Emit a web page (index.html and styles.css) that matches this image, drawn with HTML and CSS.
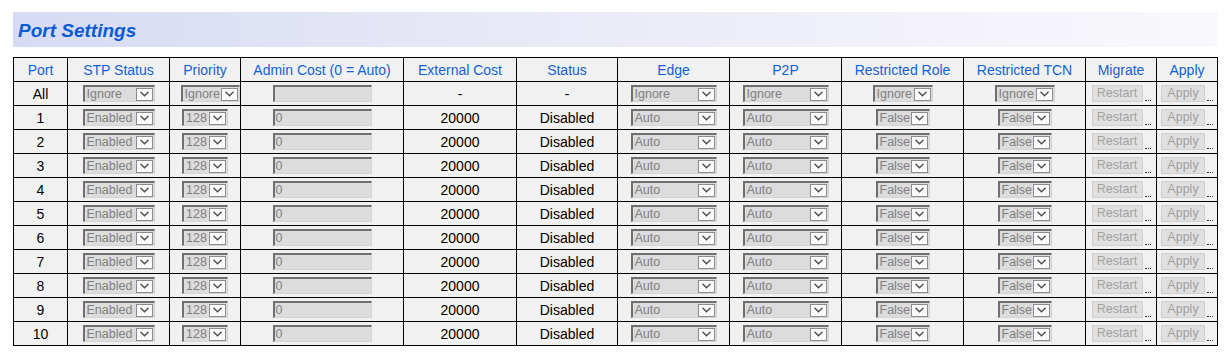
FILE: index.html
```html
<!DOCTYPE html>
<html>
<head>
<meta charset="utf-8">
<link rel="stylesheet" href="styles.css">
</head>
<body>
<div class="page">
  <div class="titlebar"><h1>Port Settings</h1></div>
  <table class="grid">
    <colgroup>
      <col class="c-port"><col class="c-stp"><col class="c-pri"><col class="c-admin"><col class="c-ext"><col class="c-status"><col class="c-edge"><col class="c-p2p"><col class="c-rr"><col class="c-tcn"><col class="c-mig"><col class="c-apply">
    </colgroup>
    <thead>
      <tr><th>Port</th><th>STP Status</th><th>Priority</th><th>Admin Cost (0 = Auto)</th><th>External Cost</th><th>Status</th><th>Edge</th><th>P2P</th><th>Restricted Role</th><th>Restricted TCN</th><th>Migrate</th><th>Apply</th></tr>
    </thead>
    <tbody>
      <tr><td>All</td>
        <td><span class="sel w-stp"><span class="v">Ignore</span><span class="arr"><svg width="9" height="6" viewBox="0 0 9 6"><polyline points="0.5,0.8 4.5,4.8 8.5,0.8"/></svg></span></span></td>
        <td><span class="sel w-pri-all"><span class="v">Ignore</span><span class="arr"><svg width="9" height="6" viewBox="0 0 9 6"><polyline points="0.5,0.8 4.5,4.8 8.5,0.8"/></svg></span></span></td>
        <td><span class="inp"></span></td>
        <td>-</td><td>-</td>
        <td><span class="sel w-edge"><span class="v">Ignore</span><span class="arr"><svg width="9" height="6" viewBox="0 0 9 6"><polyline points="0.5,0.8 4.5,4.8 8.5,0.8"/></svg></span></span></td>
        <td><span class="sel w-edge"><span class="v">Ignore</span><span class="arr"><svg width="9" height="6" viewBox="0 0 9 6"><polyline points="0.5,0.8 4.5,4.8 8.5,0.8"/></svg></span></span></td>
        <td><span class="sel w-ign"><span class="v">Ignore</span><span class="arr"><svg width="9" height="6" viewBox="0 0 9 6"><polyline points="0.5,0.8 4.5,4.8 8.5,0.8"/></svg></span></span></td>
        <td><span class="sel w-ign"><span class="v">Ignore</span><span class="arr"><svg width="9" height="6" viewBox="0 0 9 6"><polyline points="0.5,0.8 4.5,4.8 8.5,0.8"/></svg></span></span></td>
        <td><span class="btn w-restart">Restart</span><span class="dots"></span></td>
        <td><span class="btn w-apply">Apply</span><span class="dots"></span></td>
      </tr>
      <tr><td>1</td>
        <td><span class="sel w-stp"><span class="v">Enabled</span><span class="arr"><svg width="9" height="6" viewBox="0 0 9 6"><polyline points="0.5,0.8 4.5,4.8 8.5,0.8"/></svg></span></span></td>
        <td><span class="sel w-pri"><span class="v">128</span><span class="arr"><svg width="9" height="6" viewBox="0 0 9 6"><polyline points="0.5,0.8 4.5,4.8 8.5,0.8"/></svg></span></span></td>
        <td><span class="inp">0</span></td>
        <td>20000</td><td>Disabled</td>
        <td><span class="sel w-edge"><span class="v">Auto</span><span class="arr"><svg width="9" height="6" viewBox="0 0 9 6"><polyline points="0.5,0.8 4.5,4.8 8.5,0.8"/></svg></span></span></td>
        <td><span class="sel w-edge"><span class="v">Auto</span><span class="arr"><svg width="9" height="6" viewBox="0 0 9 6"><polyline points="0.5,0.8 4.5,4.8 8.5,0.8"/></svg></span></span></td>
        <td><span class="sel w-false"><span class="v">False</span><span class="arr"><svg width="9" height="6" viewBox="0 0 9 6"><polyline points="0.5,0.8 4.5,4.8 8.5,0.8"/></svg></span></span></td>
        <td><span class="sel w-false"><span class="v">False</span><span class="arr"><svg width="9" height="6" viewBox="0 0 9 6"><polyline points="0.5,0.8 4.5,4.8 8.5,0.8"/></svg></span></span></td>
        <td><span class="btn w-restart">Restart</span><span class="dots"></span></td>
        <td><span class="btn w-apply">Apply</span><span class="dots"></span></td>
      </tr>
      <tr><td>2</td>
        <td><span class="sel w-stp"><span class="v">Enabled</span><span class="arr"><svg width="9" height="6" viewBox="0 0 9 6"><polyline points="0.5,0.8 4.5,4.8 8.5,0.8"/></svg></span></span></td>
        <td><span class="sel w-pri"><span class="v">128</span><span class="arr"><svg width="9" height="6" viewBox="0 0 9 6"><polyline points="0.5,0.8 4.5,4.8 8.5,0.8"/></svg></span></span></td>
        <td><span class="inp">0</span></td>
        <td>20000</td><td>Disabled</td>
        <td><span class="sel w-edge"><span class="v">Auto</span><span class="arr"><svg width="9" height="6" viewBox="0 0 9 6"><polyline points="0.5,0.8 4.5,4.8 8.5,0.8"/></svg></span></span></td>
        <td><span class="sel w-edge"><span class="v">Auto</span><span class="arr"><svg width="9" height="6" viewBox="0 0 9 6"><polyline points="0.5,0.8 4.5,4.8 8.5,0.8"/></svg></span></span></td>
        <td><span class="sel w-false"><span class="v">False</span><span class="arr"><svg width="9" height="6" viewBox="0 0 9 6"><polyline points="0.5,0.8 4.5,4.8 8.5,0.8"/></svg></span></span></td>
        <td><span class="sel w-false"><span class="v">False</span><span class="arr"><svg width="9" height="6" viewBox="0 0 9 6"><polyline points="0.5,0.8 4.5,4.8 8.5,0.8"/></svg></span></span></td>
        <td><span class="btn w-restart">Restart</span><span class="dots"></span></td>
        <td><span class="btn w-apply">Apply</span><span class="dots"></span></td>
      </tr>
      <tr><td>3</td>
        <td><span class="sel w-stp"><span class="v">Enabled</span><span class="arr"><svg width="9" height="6" viewBox="0 0 9 6"><polyline points="0.5,0.8 4.5,4.8 8.5,0.8"/></svg></span></span></td>
        <td><span class="sel w-pri"><span class="v">128</span><span class="arr"><svg width="9" height="6" viewBox="0 0 9 6"><polyline points="0.5,0.8 4.5,4.8 8.5,0.8"/></svg></span></span></td>
        <td><span class="inp">0</span></td>
        <td>20000</td><td>Disabled</td>
        <td><span class="sel w-edge"><span class="v">Auto</span><span class="arr"><svg width="9" height="6" viewBox="0 0 9 6"><polyline points="0.5,0.8 4.5,4.8 8.5,0.8"/></svg></span></span></td>
        <td><span class="sel w-edge"><span class="v">Auto</span><span class="arr"><svg width="9" height="6" viewBox="0 0 9 6"><polyline points="0.5,0.8 4.5,4.8 8.5,0.8"/></svg></span></span></td>
        <td><span class="sel w-false"><span class="v">False</span><span class="arr"><svg width="9" height="6" viewBox="0 0 9 6"><polyline points="0.5,0.8 4.5,4.8 8.5,0.8"/></svg></span></span></td>
        <td><span class="sel w-false"><span class="v">False</span><span class="arr"><svg width="9" height="6" viewBox="0 0 9 6"><polyline points="0.5,0.8 4.5,4.8 8.5,0.8"/></svg></span></span></td>
        <td><span class="btn w-restart">Restart</span><span class="dots"></span></td>
        <td><span class="btn w-apply">Apply</span><span class="dots"></span></td>
      </tr>
      <tr><td>4</td>
        <td><span class="sel w-stp"><span class="v">Enabled</span><span class="arr"><svg width="9" height="6" viewBox="0 0 9 6"><polyline points="0.5,0.8 4.5,4.8 8.5,0.8"/></svg></span></span></td>
        <td><span class="sel w-pri"><span class="v">128</span><span class="arr"><svg width="9" height="6" viewBox="0 0 9 6"><polyline points="0.5,0.8 4.5,4.8 8.5,0.8"/></svg></span></span></td>
        <td><span class="inp">0</span></td>
        <td>20000</td><td>Disabled</td>
        <td><span class="sel w-edge"><span class="v">Auto</span><span class="arr"><svg width="9" height="6" viewBox="0 0 9 6"><polyline points="0.5,0.8 4.5,4.8 8.5,0.8"/></svg></span></span></td>
        <td><span class="sel w-edge"><span class="v">Auto</span><span class="arr"><svg width="9" height="6" viewBox="0 0 9 6"><polyline points="0.5,0.8 4.5,4.8 8.5,0.8"/></svg></span></span></td>
        <td><span class="sel w-false"><span class="v">False</span><span class="arr"><svg width="9" height="6" viewBox="0 0 9 6"><polyline points="0.5,0.8 4.5,4.8 8.5,0.8"/></svg></span></span></td>
        <td><span class="sel w-false"><span class="v">False</span><span class="arr"><svg width="9" height="6" viewBox="0 0 9 6"><polyline points="0.5,0.8 4.5,4.8 8.5,0.8"/></svg></span></span></td>
        <td><span class="btn w-restart">Restart</span><span class="dots"></span></td>
        <td><span class="btn w-apply">Apply</span><span class="dots"></span></td>
      </tr>
      <tr><td>5</td>
        <td><span class="sel w-stp"><span class="v">Enabled</span><span class="arr"><svg width="9" height="6" viewBox="0 0 9 6"><polyline points="0.5,0.8 4.5,4.8 8.5,0.8"/></svg></span></span></td>
        <td><span class="sel w-pri"><span class="v">128</span><span class="arr"><svg width="9" height="6" viewBox="0 0 9 6"><polyline points="0.5,0.8 4.5,4.8 8.5,0.8"/></svg></span></span></td>
        <td><span class="inp">0</span></td>
        <td>20000</td><td>Disabled</td>
        <td><span class="sel w-edge"><span class="v">Auto</span><span class="arr"><svg width="9" height="6" viewBox="0 0 9 6"><polyline points="0.5,0.8 4.5,4.8 8.5,0.8"/></svg></span></span></td>
        <td><span class="sel w-edge"><span class="v">Auto</span><span class="arr"><svg width="9" height="6" viewBox="0 0 9 6"><polyline points="0.5,0.8 4.5,4.8 8.5,0.8"/></svg></span></span></td>
        <td><span class="sel w-false"><span class="v">False</span><span class="arr"><svg width="9" height="6" viewBox="0 0 9 6"><polyline points="0.5,0.8 4.5,4.8 8.5,0.8"/></svg></span></span></td>
        <td><span class="sel w-false"><span class="v">False</span><span class="arr"><svg width="9" height="6" viewBox="0 0 9 6"><polyline points="0.5,0.8 4.5,4.8 8.5,0.8"/></svg></span></span></td>
        <td><span class="btn w-restart">Restart</span><span class="dots"></span></td>
        <td><span class="btn w-apply">Apply</span><span class="dots"></span></td>
      </tr>
      <tr><td>6</td>
        <td><span class="sel w-stp"><span class="v">Enabled</span><span class="arr"><svg width="9" height="6" viewBox="0 0 9 6"><polyline points="0.5,0.8 4.5,4.8 8.5,0.8"/></svg></span></span></td>
        <td><span class="sel w-pri"><span class="v">128</span><span class="arr"><svg width="9" height="6" viewBox="0 0 9 6"><polyline points="0.5,0.8 4.5,4.8 8.5,0.8"/></svg></span></span></td>
        <td><span class="inp">0</span></td>
        <td>20000</td><td>Disabled</td>
        <td><span class="sel w-edge"><span class="v">Auto</span><span class="arr"><svg width="9" height="6" viewBox="0 0 9 6"><polyline points="0.5,0.8 4.5,4.8 8.5,0.8"/></svg></span></span></td>
        <td><span class="sel w-edge"><span class="v">Auto</span><span class="arr"><svg width="9" height="6" viewBox="0 0 9 6"><polyline points="0.5,0.8 4.5,4.8 8.5,0.8"/></svg></span></span></td>
        <td><span class="sel w-false"><span class="v">False</span><span class="arr"><svg width="9" height="6" viewBox="0 0 9 6"><polyline points="0.5,0.8 4.5,4.8 8.5,0.8"/></svg></span></span></td>
        <td><span class="sel w-false"><span class="v">False</span><span class="arr"><svg width="9" height="6" viewBox="0 0 9 6"><polyline points="0.5,0.8 4.5,4.8 8.5,0.8"/></svg></span></span></td>
        <td><span class="btn w-restart">Restart</span><span class="dots"></span></td>
        <td><span class="btn w-apply">Apply</span><span class="dots"></span></td>
      </tr>
      <tr><td>7</td>
        <td><span class="sel w-stp"><span class="v">Enabled</span><span class="arr"><svg width="9" height="6" viewBox="0 0 9 6"><polyline points="0.5,0.8 4.5,4.8 8.5,0.8"/></svg></span></span></td>
        <td><span class="sel w-pri"><span class="v">128</span><span class="arr"><svg width="9" height="6" viewBox="0 0 9 6"><polyline points="0.5,0.8 4.5,4.8 8.5,0.8"/></svg></span></span></td>
        <td><span class="inp">0</span></td>
        <td>20000</td><td>Disabled</td>
        <td><span class="sel w-edge"><span class="v">Auto</span><span class="arr"><svg width="9" height="6" viewBox="0 0 9 6"><polyline points="0.5,0.8 4.5,4.8 8.5,0.8"/></svg></span></span></td>
        <td><span class="sel w-edge"><span class="v">Auto</span><span class="arr"><svg width="9" height="6" viewBox="0 0 9 6"><polyline points="0.5,0.8 4.5,4.8 8.5,0.8"/></svg></span></span></td>
        <td><span class="sel w-false"><span class="v">False</span><span class="arr"><svg width="9" height="6" viewBox="0 0 9 6"><polyline points="0.5,0.8 4.5,4.8 8.5,0.8"/></svg></span></span></td>
        <td><span class="sel w-false"><span class="v">False</span><span class="arr"><svg width="9" height="6" viewBox="0 0 9 6"><polyline points="0.5,0.8 4.5,4.8 8.5,0.8"/></svg></span></span></td>
        <td><span class="btn w-restart">Restart</span><span class="dots"></span></td>
        <td><span class="btn w-apply">Apply</span><span class="dots"></span></td>
      </tr>
      <tr><td>8</td>
        <td><span class="sel w-stp"><span class="v">Enabled</span><span class="arr"><svg width="9" height="6" viewBox="0 0 9 6"><polyline points="0.5,0.8 4.5,4.8 8.5,0.8"/></svg></span></span></td>
        <td><span class="sel w-pri"><span class="v">128</span><span class="arr"><svg width="9" height="6" viewBox="0 0 9 6"><polyline points="0.5,0.8 4.5,4.8 8.5,0.8"/></svg></span></span></td>
        <td><span class="inp">0</span></td>
        <td>20000</td><td>Disabled</td>
        <td><span class="sel w-edge"><span class="v">Auto</span><span class="arr"><svg width="9" height="6" viewBox="0 0 9 6"><polyline points="0.5,0.8 4.5,4.8 8.5,0.8"/></svg></span></span></td>
        <td><span class="sel w-edge"><span class="v">Auto</span><span class="arr"><svg width="9" height="6" viewBox="0 0 9 6"><polyline points="0.5,0.8 4.5,4.8 8.5,0.8"/></svg></span></span></td>
        <td><span class="sel w-false"><span class="v">False</span><span class="arr"><svg width="9" height="6" viewBox="0 0 9 6"><polyline points="0.5,0.8 4.5,4.8 8.5,0.8"/></svg></span></span></td>
        <td><span class="sel w-false"><span class="v">False</span><span class="arr"><svg width="9" height="6" viewBox="0 0 9 6"><polyline points="0.5,0.8 4.5,4.8 8.5,0.8"/></svg></span></span></td>
        <td><span class="btn w-restart">Restart</span><span class="dots"></span></td>
        <td><span class="btn w-apply">Apply</span><span class="dots"></span></td>
      </tr>
      <tr><td>9</td>
        <td><span class="sel w-stp"><span class="v">Enabled</span><span class="arr"><svg width="9" height="6" viewBox="0 0 9 6"><polyline points="0.5,0.8 4.5,4.8 8.5,0.8"/></svg></span></span></td>
        <td><span class="sel w-pri"><span class="v">128</span><span class="arr"><svg width="9" height="6" viewBox="0 0 9 6"><polyline points="0.5,0.8 4.5,4.8 8.5,0.8"/></svg></span></span></td>
        <td><span class="inp">0</span></td>
        <td>20000</td><td>Disabled</td>
        <td><span class="sel w-edge"><span class="v">Auto</span><span class="arr"><svg width="9" height="6" viewBox="0 0 9 6"><polyline points="0.5,0.8 4.5,4.8 8.5,0.8"/></svg></span></span></td>
        <td><span class="sel w-edge"><span class="v">Auto</span><span class="arr"><svg width="9" height="6" viewBox="0 0 9 6"><polyline points="0.5,0.8 4.5,4.8 8.5,0.8"/></svg></span></span></td>
        <td><span class="sel w-false"><span class="v">False</span><span class="arr"><svg width="9" height="6" viewBox="0 0 9 6"><polyline points="0.5,0.8 4.5,4.8 8.5,0.8"/></svg></span></span></td>
        <td><span class="sel w-false"><span class="v">False</span><span class="arr"><svg width="9" height="6" viewBox="0 0 9 6"><polyline points="0.5,0.8 4.5,4.8 8.5,0.8"/></svg></span></span></td>
        <td><span class="btn w-restart">Restart</span><span class="dots"></span></td>
        <td><span class="btn w-apply">Apply</span><span class="dots"></span></td>
      </tr>
      <tr><td>10</td>
        <td><span class="sel w-stp"><span class="v">Enabled</span><span class="arr"><svg width="9" height="6" viewBox="0 0 9 6"><polyline points="0.5,0.8 4.5,4.8 8.5,0.8"/></svg></span></span></td>
        <td><span class="sel w-pri"><span class="v">128</span><span class="arr"><svg width="9" height="6" viewBox="0 0 9 6"><polyline points="0.5,0.8 4.5,4.8 8.5,0.8"/></svg></span></span></td>
        <td><span class="inp">0</span></td>
        <td>20000</td><td>Disabled</td>
        <td><span class="sel w-edge"><span class="v">Auto</span><span class="arr"><svg width="9" height="6" viewBox="0 0 9 6"><polyline points="0.5,0.8 4.5,4.8 8.5,0.8"/></svg></span></span></td>
        <td><span class="sel w-edge"><span class="v">Auto</span><span class="arr"><svg width="9" height="6" viewBox="0 0 9 6"><polyline points="0.5,0.8 4.5,4.8 8.5,0.8"/></svg></span></span></td>
        <td><span class="sel w-false"><span class="v">False</span><span class="arr"><svg width="9" height="6" viewBox="0 0 9 6"><polyline points="0.5,0.8 4.5,4.8 8.5,0.8"/></svg></span></span></td>
        <td><span class="sel w-false"><span class="v">False</span><span class="arr"><svg width="9" height="6" viewBox="0 0 9 6"><polyline points="0.5,0.8 4.5,4.8 8.5,0.8"/></svg></span></span></td>
        <td><span class="btn w-restart">Restart</span><span class="dots"></span></td>
        <td><span class="btn w-apply">Apply</span><span class="dots"></span></td>
      </tr>
    </tbody>
  </table>
</div>
</body>
</html>
```
FILE: styles.css
```css
html, body {
  margin: 0;
  padding: 0;
  background: #ffffff;
}
.page {
  padding: 12px 0 0 13px;
  font-family: Arial, "Liberation Sans", sans-serif;
}
.titlebar {
  width: 1205px;
  height: 35px;
  box-sizing: border-box;
  padding-left: 5px;
  display: flex;
  align-items: center;
  background: linear-gradient(to right, #d6dbf3 0%, #e8e9f7 40%, #f9f8fc 100%);
}
.titlebar h1 {
  margin: 0;
  font-size: 19px;
  font-weight: bold;
  font-style: italic;
  color: #0b5bd3;
  line-height: 1;
  padding-top: 1px;
}
.grid {
  margin-top: 10px;
  border-collapse: collapse;
  table-layout: fixed;
  width: 1205px;
}
.c-port { width: 54px; }
.c-stp { width: 102px; }
.c-pri { width: 71px; }
.c-admin { width: 163px; }
.c-ext { width: 113px; }
.c-status { width: 101px; }
.c-edge { width: 112px; }
.c-p2p { width: 112px; }
.c-rr { width: 122px; }
.c-tcn { width: 122px; }
.c-mig { width: 71px; }
.c-apply { width: 61px; }
.grid th, .grid td {
  border: 1px solid #000;
  height: 23px;
  padding: 0;
  text-align: center;
  vertical-align: middle;
  background: #f1f1f1;
  font-size: 14px;
  white-space: nowrap;
  color: #000;
}
.grid th {
  font-weight: normal;
  color: #1062d4;
}
.sel {
  display: inline-flex;
  align-items: center;
  vertical-align: middle;
  box-sizing: border-box;
  height: 17px;
  border-top: 2px solid #6f6f6f;
  border-left: 2px solid #6f6f6f;
  border-right: 1px solid #d4d4d4;
  border-bottom: 1px solid #d4d4d4;
  background: #dcdcdc;
  text-align: left;
}
.sel .v {
  flex: 1;
  padding-left: 2px;
  font-size: 12.5px;
  color: #808080;
  line-height: 14px;
  overflow: hidden;
}
.arr {
  width: 17px;
  height: 13px;
  box-sizing: border-box;
  border: 1px solid #8c8c8c;
  background: #fbfbfb;
  margin-right: 1px;
  display: flex;
  align-items: center;
  justify-content: center;
}
.arr svg polyline {
  fill: none;
  stroke: #4a4a4a;
  stroke-width: 1.3;
}
.w-stp { width: 72px; }
.w-pri-all { width: 59px; margin-left: 10px; }
.w-pri { width: 46px; }
.w-edge { width: 86px; }
.w-ign { width: 60px; }
.w-false { width: 54px; }
.inp {
  display: inline-block;
  vertical-align: middle;
  box-sizing: border-box;
  width: 99px;
  height: 17px;
  border-top: 2px solid #6f6f6f;
  border-left: 2px solid #6f6f6f;
  border-right: 1px solid #d4d4d4;
  border-bottom: 1px solid #d4d4d4;
  background: #dcdcdc;
  font-size: 12.5px;
  line-height: 14px;
  color: #808080;
  text-align: left;
  padding-left: 1px;
}
.btn {
  display: inline-block;
  vertical-align: middle;
  box-sizing: border-box;
  height: 17px;
  border: 1px solid #cfcfcf;
  background: #e0e0e0;
  font-size: 12.5px;
  line-height: 15px;
  color: #a0a0a0;
  text-align: center;
}
.w-restart { width: 51px; }
.w-apply { width: 44px; }
.dots {
  display: inline-block;
  vertical-align: middle;
  width: 6px;
  height: 14px;
  margin-left: 2px;
  border-bottom: 1px dotted #333;
}
```
